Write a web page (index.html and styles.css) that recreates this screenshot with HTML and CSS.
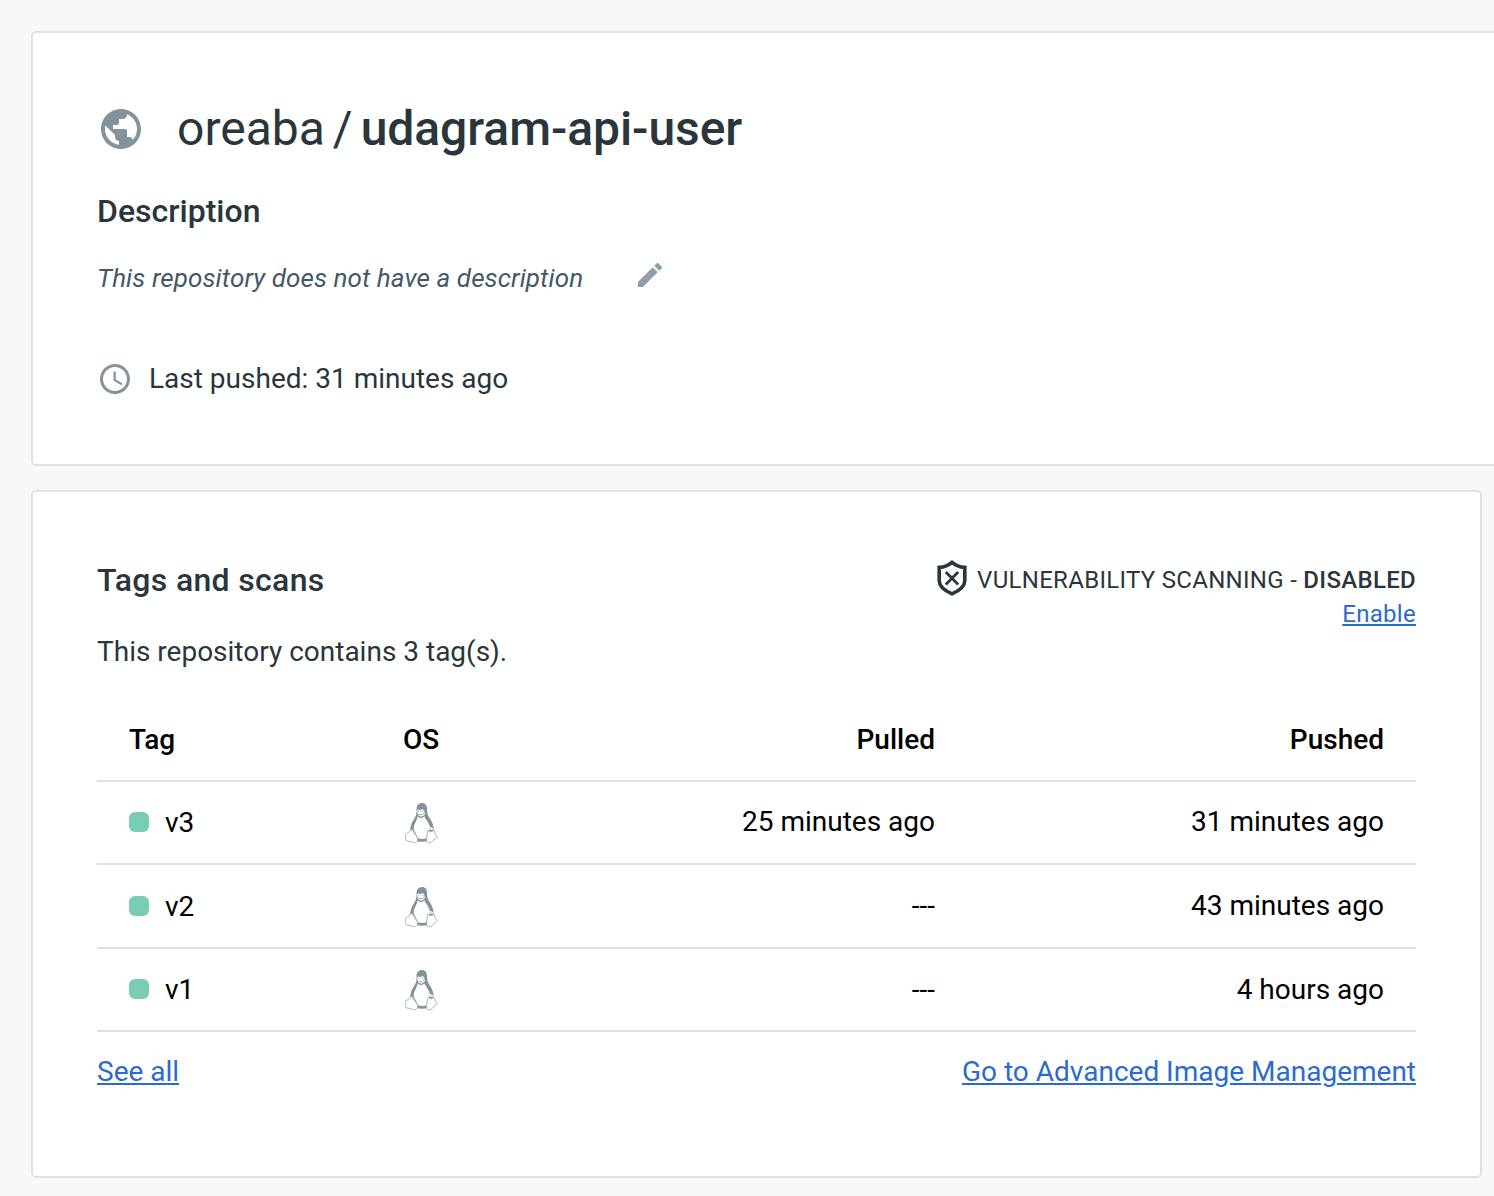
FILE: index.html
```html
<!DOCTYPE html>
<html lang="en">
<head>
<meta charset="utf-8">
<title>oreaba / udagram-api-user</title>
<link rel="stylesheet" href="styles.css">
</head>
<body>
<svg width="0" height="0" class="defs" aria-hidden="true">
  <symbol id="tux" viewBox="0 0 34 42" preserveAspectRatio="none">
    <path d="M17.500 1c-4.300 0-5.800 3-5.600 6.800.2 3.600-.3 6-2.400 9C7.300 20 5.500 24 5.200 28.500L8 31l4 8.300c3 .5 7.500.5 11 0L25.500 31l4.200-2.500c0-4.500-1.700-8.500-4.200-12.200-2-2.800-2.700-5-2.700-8.500C22.800 3.500 21 1 17.500 1z" fill="#83939c"/>
    <path d="M13.300 14.300c1.500 2.300 4.800 2.200 6.700-.1 1.600 4.200 5.700 7 5.800 12.300l-2.800 3-.8 6.800c-3 .9-6 .9-8.800 0L9 27.500c-.3-4.700 2.900-8 4.300-13.200z" fill="#fff"/>
    <path d="M12.500 9c0-2.100 3-2.100 3 .2 0-2.700 4.500-2.700 4.500.2 0 1 .4 1.900.5 2.600-.6 1.500-2.500 2.700-4.200 2.600-1.500-.1-2.700-1-3-2.300z" fill="#fff"/>
    <path d="M13.500 9.200h1.100m3 0h1.200m-4.800 3.100c2 .9 3.800.4 5.500-.8" fill="none" stroke="#83939c" stroke-width=".8"/>
    <path d="M5.700 28c1.300-.8 2.300.1 3.100 1.700l3.600 5.500c1.800 3-.5 6.100-3.600 5.400C6 39.900 4.200 39.200 1.500 38.800c-1.500-.4-1.100-1.500-.8-3.100.3-1.300-.6-3.200.2-4.200.8-.8 2.600-.2 3.200-1.300.5-.8.700-1.700 1.600-2.200zM24.400 28.600c.9.900 2.400 1.400 4 .7 1-.5 1.300-1.300 1.900-.5.800 1.400.5 3.800 2.300 5.200 1.100 1 .3 1.900-1.200 2.600-2.300 1.200-3.300 3.400-5.700 4.100-2.200.6-3.500-.4-3.400-2.600.1-3.500.4-6 .9-8.300.2-.8.500-1.200 1.200-1.200z" fill="#fff" stroke="#a0acb3" stroke-width=".9"/>
    <path d="M24 28c-.7-2 1.300-3.100 3.300-2.400 1.200.4 1.700 1.400 1.700 2.400" fill="#dce1e4" stroke="#fff" stroke-width=".8"/>
  </symbol>
</svg>
<main class="page">
  <section class="card card-summary">
    <div class="title-row">
      <svg class="globe" viewBox="0 0 24 24"><path fill="currentColor" d="M12 2C6.480 2 2 6.480 2 12s4.480 10 10 10 10-4.480 10-10S17.520 2 12 2zm-1 17.930c-3.950-.49-7-3.850-7-7.930 0-.62.080-1.210.21-1.790L9 15v1c0 1.100.9 2 2 2v1.930zm6.900-2.540c-.26-.81-1-1.390-1.900-1.390h-1v-3c0-.55-.45-1-1-1H8v-2h2c.55 0 1-.45 1-1V7h2c1.100 0 2-.9 2-2v-.41c2.930 1.190 5 4.060 5 7.410 0 2.080-.8 3.970-2.100 5.390z"/></svg>
      <h1 class="title"><span class="owner">oreaba</span><span class="slash">/</span><span class="repo">udagram-api-user</span></h1>
    </div>
    <h2 class="heading desc-heading">Description</h2>
    <div class="desc-row">
      <span class="desc">This repository does not have a description</span>
      <svg class="pencil" viewBox="0 0 24 24"><path fill="currentColor" d="M3 17.250V21h3.750L17.810 9.940l-3.750-3.750L3 17.250zM20.710 7.040c.39-.39.39-1.020 0-1.410l-2.340-2.340c-.39-.39-1.020-.39-1.410 0l-1.830 1.830 3.750 3.750 1.830-1.830z"/></svg>
    </div>
    <div class="pushed-row">
      <svg class="clock" viewBox="0 0 24 24"><path fill="currentColor" d="M11.990 2C6.470 2 2 6.480 2 12s4.470 10 9.990 10C17.520 22 22 17.520 22 12S17.520 2 11.990 2zM12 20c-4.420 0-8-3.580-8-8s3.580-8 8-8 8 3.580 8 8-3.580 8-8 8zm.5-13H11v6l5.250 3.150.75-1.230-4.500-2.670z"/></svg>
      <span class="last-pushed">Last pushed: 31 minutes ago</span>
    </div>
  </section>
  <section class="card card-tags">
    <div class="tags-head">
      <div>
        <h2 class="heading tags-heading">Tags and scans</h2>
        <p class="contains">This repository contains 3 tag(s).</p>
      </div>
      <div class="scan">
        <div class="scan-row">
          <svg class="shield" viewBox="0 0 32 38" fill="none" stroke="currentColor"><path stroke-width="3.600" d="M16 3.300c-3.500 3-7.500 4.600-12.800 5.100v13.100c0 6.500 6.300 10.500 12.800 13.400 6.500-2.900 12.800-6.900 12.800-13.400V8.400C23.500 7.900 19.500 6.300 16 3.300z"/><path stroke-width="2.800" d="M9.800 13l12.400 12.400M22.200 13L9.800 25.400"/></svg>
          <span class="scan-text">VULNERABILITY SCANNING - <b>DISABLED</b></span>
        </div>
        <a class="link enable" href="#">Enable</a>
      </div>
    </div>
    <table class="tags">
      <thead><tr><th class="c-tag">Tag</th><th class="c-os">OS</th><th class="c-pull">Pulled</th><th class="c-push">Pushed</th></tr></thead>
      <tbody>
        <tr><td><span class="tag"><i class="dot"></i>v3</span></td><td class="c-os"><svg class="tux"><use href="#tux"/></svg></td><td class="c-pull">25 minutes ago</td><td class="c-push">31 minutes ago</td></tr>
        <tr><td><span class="tag"><i class="dot"></i>v2</span></td><td class="c-os"><svg class="tux"><use href="#tux"/></svg></td><td class="c-pull">---</td><td class="c-push">43 minutes ago</td></tr>
        <tr><td><span class="tag"><i class="dot"></i>v1</span></td><td class="c-os"><svg class="tux"><use href="#tux"/></svg></td><td class="c-pull">---</td><td class="c-push">4 hours ago</td></tr>
      </tbody>
    </table>
    <div class="links"><a class="link" href="#">See all</a><a class="link" href="#">Go to Advanced Image Management</a></div>
  </section>
</main>
</body>
</html>
```
FILE: styles.css
```css
* { box-sizing: border-box; }
body {
  margin: 0;
  background: #f7f8fa;
  color: #2a353c;
  font: 28px/36px Roboto, sans-serif;
  letter-spacing: 0;
  overflow: hidden;
}
.defs { display: block; }
.page {
  height: 1196px;
  padding: 31px 12px 0 31px;
  display: flex;
  flex-direction: column;
  gap: 24px;
}
.card {
  background: #fff;
  border: 2px solid #e1e2e6;
  border-radius: 5px;
  padding: 64px;
}
.card-summary {
  height: 435px;
  margin-right: -12px;
  border-right: 0;
  border-radius: 5px 0 0 5px;
}
.card-tags { height: 688px; }
h1, h2, p { margin: 0; }
svg { display: block; flex: none; }

.title-row { display: flex; align-items: center; gap: 32px; height: 64px; }
.globe { width: 48px; height: 48px; color: #83939c; }
.title { font-size: 48px; line-height: 64px; font-weight: 400; display: flex; white-space: nowrap; }
.slash { margin: 0 8px 0 8px; }
.repo { font-weight: 500; letter-spacing: -.05px; }
.heading { font-size: 32px; line-height: 40px; font-weight: 500; }
.desc-heading { margin-top: 30px; }
.desc-row { display: flex; align-items: center; gap: 51px; margin-top: 27px; height: 40px; color: #445868; }
.desc { font-size: 26px; font-style: italic; letter-spacing: .09px; }
.pencil { width: 32px; height: 32px; color: #919fa8; margin-bottom: 6px; }
.pushed-row { display: flex; align-items: center; gap: 16px; margin-top: 63px; height: 36px; }
.clock { width: 36px; height: 36px; color: #83939c; }

.tags-head { display: flex; justify-content: space-between; height: 144px; }
.tags-heading { line-height: 48px; letter-spacing: .33px; }
.contains { line-height: 40px; margin-top: 28px; }
.scan { display: flex; flex-direction: column; align-items: flex-end; font-size: 24px; letter-spacing: .3px; }
.scan-row { display: flex; align-items: center; gap: 9px; height: 42px; margin-top: 1px; }
.shield { width: 32px; height: 38px; }
.scan-text { padding-top: 3px; }
.scan b { font-weight: 500; }
.enable { line-height: 30px; }
.link { color: #2b6bcf; text-decoration: underline; }

.tags { width: 100%; border-collapse: separate; border-spacing: 0; table-layout: fixed; color: #000; }
.tags th, .tags td { padding: 0; border-bottom: 2px solid #dedfe1; text-align: left; }
.tags th { height: 82px; font-weight: 500; }
.tags td { height: 83.330px; }
.tags th:first-child, .tags td:first-child { width: 290px; padding-left: 32px; }
.tags .c-os { width: 68px; text-align: center; }
.tags .c-pull { width: 480px; text-align: right; }
.tags .c-push { text-align: right; padding-right: 32px; }
.tags tbody tr:first-child .c-pull,
.tags tbody tr:first-child .c-push { padding-bottom: 2px; }
.tags tbody tr:nth-child(2) td:first-child { padding-top: 2px; }
.tags tbody tr:last-child .c-pull,
.tags tbody tr:last-child .c-push,
.tags tbody tr:last-child td:first-child { padding-top: 2px; }
.tag { display: flex; align-items: center; gap: 16px; }
.dot { width: 20px; height: 20px; border-radius: 6px; background: #79cdb2; margin-bottom: 2px; }
.tags tbody td.c-os { padding-top: 1px; }
.tags tbody tr:nth-child(2) td.c-os { padding-top: 2px; }
.tux { width: 33px; height: 42px; margin: 0 auto; }
.links { display: flex; justify-content: space-between; margin-top: 22px; }
```
